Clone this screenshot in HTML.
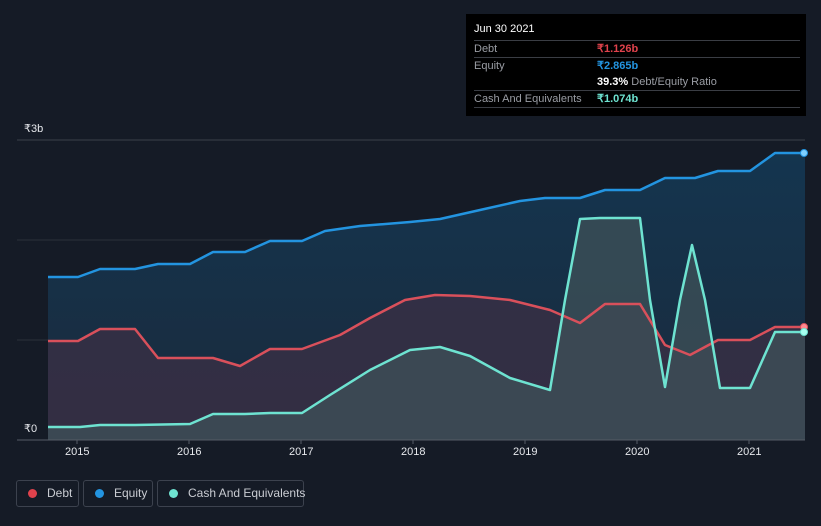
<!DOCTYPE html>
<html><head><style>
html,body{margin:0;width:821px;height:526px;background:#151b26;font-family:"Liberation Sans",sans-serif;overflow:hidden;position:relative}
.tt{position:absolute;left:466px;top:14px;width:340px;height:102px;background:#000;color:#fff;font-size:11px}
.tt .r{position:absolute;left:8px;right:6px;border-top:1px solid #3a3d44;height:17px;line-height:17px;color:#9a9da4}
.tt .v{position:absolute;left:123px;font-weight:bold}
.lg{position:absolute;top:480px;height:27px;border:1px solid #3c424e;border-radius:3px;color:#c9ccd2;font-size:12px;line-height:25px;box-sizing:border-box;white-space:nowrap}
.lg i{display:inline-block;width:9px;height:9px;border-radius:50%;margin:0 10px 0 11px;vertical-align:-1px}
.ax{position:absolute;top:446px;color:#e6e8ec;font-size:11px}
</style></head><body>
<svg width="821" height="526" style="position:absolute;left:0;top:0">
<defs>
<linearGradient id="ge" x1="0" y1="0" x2="0" y2="1"><stop offset="0" stop-color="#14354f"/><stop offset="1" stop-color="#1a2a3c"/></linearGradient>
</defs>
<line x1="17" y1="140" x2="805" y2="140" stroke="#3a404b"/>
<line x1="17" y1="240" x2="805" y2="240" stroke="#2a303b"/>
<line x1="17" y1="340" x2="805" y2="340" stroke="#2a303b"/>
<polygon fill="url(#ge)" points="48,277 78,277 100,269 135,269 158,264 190,264 213,252 245,252 270,241 302,241 325,231 360,226 410,222 440,219 480,210 520,201 545,198 580,198 605,190 640,190 665,178 695,178 718,171 750,171 775,153 805,153 805,440 48,440"/>
<polygon fill="#3a2f45" opacity="0.8" points="48,341 78,341 100,329 135,329 158,358 213,358 240,366 270,349 302,349 340,335 370,318 405,300 435,295 470,296 510,300 550,310 580,323 605,304 640,304 665,345 690,355 718,340 750,340 775,327 805,327 805,440 48,440"/>
<polygon fill="#3f5258" opacity="0.75" points="48,427 80,427 100,425 135,425 190,424 213,414 245,414 270,413 302,413 330,395 370,370 410,350 440,347 470,356 510,378 550,390 565,300 580,219 600,218 640,218 650,300 665,387 680,300 692,245 705,300 720,388 750,388 775,332 805,332 805,440 48,440"/>
<line x1="17" y1="440" x2="805" y2="440" stroke="#555b66"/>
<polyline fill="none" stroke="#2394e0" stroke-width="2.5" stroke-linejoin="round" points="48,277 78,277 100,269 135,269 158,264 190,264 213,252 245,252 270,241 302,241 325,231 360,226 410,222 440,219 480,210 520,201 545,198 580,198 605,190 640,190 665,178 695,178 718,171 750,171 775,153 805,153"/>
<polyline fill="none" stroke="#d9505b" stroke-width="2.5" stroke-linejoin="round" points="48,341 78,341 100,329 135,329 158,358 213,358 240,366 270,349 302,349 340,335 370,318 405,300 435,295 470,296 510,300 550,310 580,323 605,304 640,304 665,345 690,355 718,340 750,340 775,327 805,327"/>
<polyline fill="none" stroke="#6ee3d1" stroke-width="2.5" stroke-linejoin="round" points="48,427 80,427 100,425 135,425 190,424 213,414 245,414 270,413 302,413 330,395 370,370 410,350 440,347 470,356 510,378 550,390 565,300 580,219 600,218 640,218 650,300 665,387 680,300 692,245 705,300 720,388 750,388 775,332 805,332"/>
<circle cx="804" cy="153" r="3.5" fill="#7fd0ff" stroke="#2394e0"/>
<circle cx="804" cy="327" r="3.5" fill="#ff8a90" stroke="#d9505b"/>
<circle cx="804" cy="332" r="3.5" fill="#a6fff0" stroke="#6ee3d1"/>
<g stroke="#555b66"><line x1="77" y1="440" x2="77" y2="444"/><line x1="189" y1="440" x2="189" y2="444"/><line x1="301" y1="440" x2="301" y2="444"/><line x1="413" y1="440" x2="413" y2="444"/><line x1="525" y1="440" x2="525" y2="444"/><line x1="637" y1="440" x2="637" y2="444"/><line x1="749" y1="440" x2="749" y2="444"/></g>
</svg>
<div style="position:absolute;left:24px;top:122px;color:#e6e8ec;font-size:11px">₹3b</div>
<div style="position:absolute;left:24px;top:422px;color:#e6e8ec;font-size:11px">₹0</div>
<div class="ax" style="left:65px">2015</div><div class="ax" style="left:177px">2016</div><div class="ax" style="left:289px">2017</div><div class="ax" style="left:401px">2018</div><div class="ax" style="left:513px">2019</div><div class="ax" style="left:625px">2020</div><div class="ax" style="left:737px">2021</div>
<div class="tt">
<div style="position:absolute;left:8px;top:9px;color:#fff">Jun 30 2021</div>
<div class="r" style="top:26px">Debt<span class="v" style="color:#e0424c">₹1.126b</span></div>
<div class="r" style="top:43px">Equity<span class="v" style="color:#2394e0">₹2.865b</span></div>
<div style="position:absolute;left:131px;top:60px;line-height:17px;color:#9a9da4"><b style="color:#fff">39.3%</b> Debt/Equity Ratio</div>
<div class="r" style="top:76px">Cash And Equivalents<span class="v" style="color:#6ee3d1">₹1.074b</span></div>
<div style="position:absolute;left:8px;right:6px;top:93px;border-top:1px solid #3a3d44"></div>
</div>
<div class="lg" style="left:16px;width:63px"><i style="background:#e0424c"></i>Debt</div>
<div class="lg" style="left:83px;width:70px"><i style="background:#2394e0"></i>Equity</div>
<div class="lg" style="left:157px;width:147px"><i style="background:#6ee3d1"></i>Cash And Equivalents</div>
</body></html>
